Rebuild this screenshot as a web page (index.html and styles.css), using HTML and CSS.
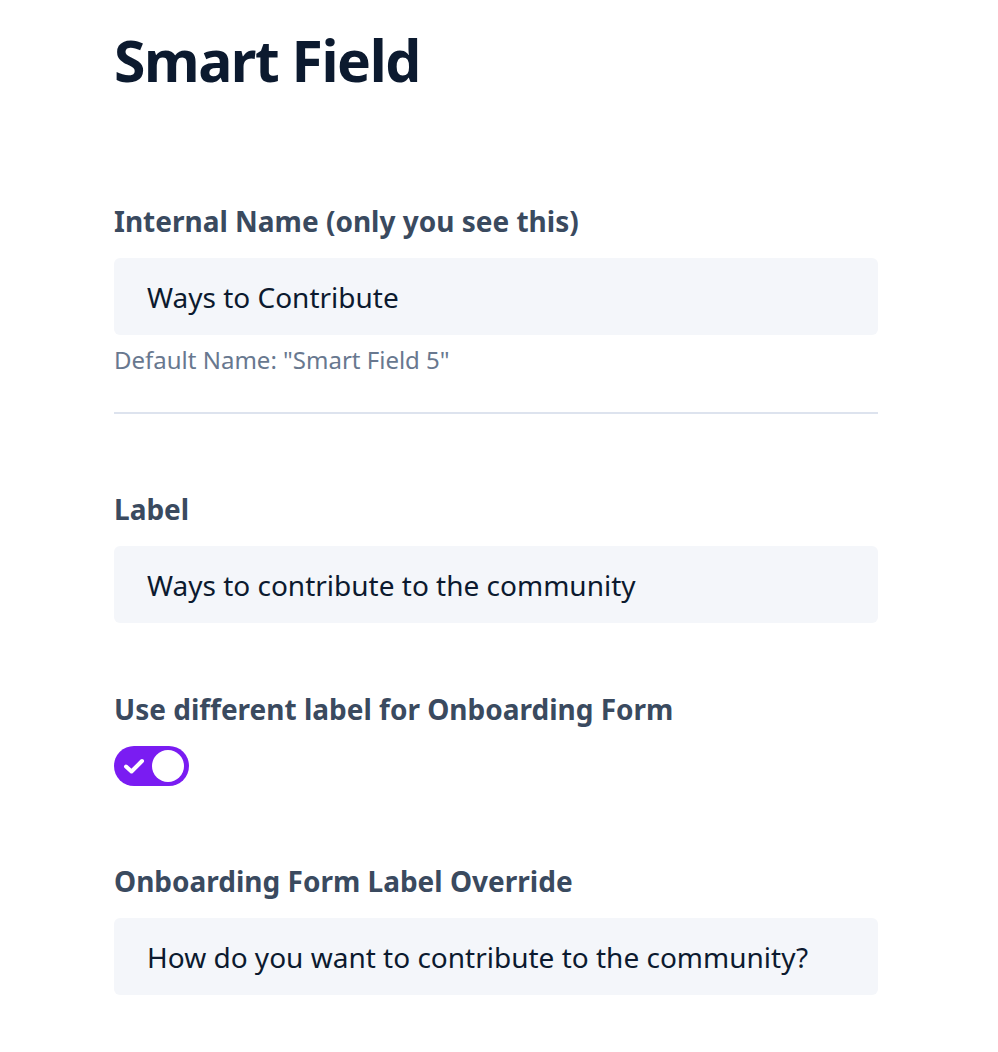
FILE: index.html
```html
<!DOCTYPE html>
<html>
<head>
<meta charset="utf-8">
<link rel="stylesheet" href="styles.css">
</head>
<body>
<main class="page">
  <h1 class="title">Smart Field</h1>

  <section class="field first">
    <label class="label">Internal Name (only you see this)</label>
    <div class="input">Ways to Contribute</div>
    <div class="help">Default Name: "Smart Field 5"</div>
  </section>

  <hr class="divider">

  <section class="field after-divider">
    <label class="label">Label</label>
    <div class="input">Ways to contribute to the community</div>
  </section>

  <section class="field">
    <label class="label">Use different label for Onboarding Form</label>
    <div class="toggle">
      <svg class="check" width="22" height="18" viewBox="0 0 22 18"><path d="M3 9.5 L8.5 14.5 L19 4" fill="none" stroke="#fff" stroke-width="4" stroke-linecap="round" stroke-linejoin="round"/></svg>
      <span class="knob"></span>
    </div>
  </section>

  <section class="field after-toggle">
    <label class="label">Onboarding Form Label Override</label>
    <div class="input">How do you want to contribute to the community?</div>
  </section>
</main>
</body>
</html>
```
FILE: styles.css
```css
html, body {
  margin: 0;
  padding: 0;
  background: #ffffff;
}
body {
  font-family: "Noto Sans", "Open Sans", sans-serif;
  color: #0f172a;
}
.page {
  width: 764px;
  margin-left: 114px;
  padding-top: 26px;
}
.title {
  margin: 0;
  font-size: 57px;
  font-weight: 700;
  line-height: 68px;
  letter-spacing: -0.025em;
  color: #0c1a2f;
}
.field {
  display: flex;
  flex-direction: column;
  align-items: flex-start;
  margin-top: 68px;
}
.field.first {
  margin-top: 109px;
}
.field.after-divider,
.field.after-toggle {
  margin-top: 77px;
}
.label {
  font-size: 28px;
  font-weight: 700;
  color: #3a4a5f;
  line-height: 36px;
  margin-bottom: 19px;
}
.input {
  align-self: stretch;
  height: 77px;
  box-sizing: border-box;
  background: #f4f6fa;
  border-radius: 6px;
  padding: 0 33px;
  display: flex;
  align-items: center;
  font-size: 28px;
  color: #0c1a2f;
}
.help {
  margin-top: 9px;
  font-size: 24px;
  line-height: 32px;
  color: #68788f;
}
.divider {
  border: none;
  height: 2px;
  background: #dde3ee;
  margin: 36px 0 0 0;
}
.toggle {
  width: 75px;
  height: 40px;
  border-radius: 20px;
  background: #7a1cf2;
  position: relative;
}
.check {
  position: absolute;
  left: 9px;
  top: 11px;
}
.knob {
  position: absolute;
  right: 5px;
  top: 4px;
  width: 32px;
  height: 32px;
  border-radius: 50%;
  background: #ffffff;
}
```
